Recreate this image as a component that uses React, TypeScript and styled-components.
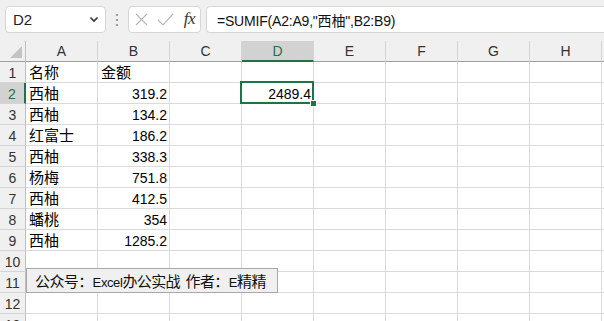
import styled, { createGlobalStyle } from 'styled-components'

const GlobalStyle = createGlobalStyle`
  html, body {
    margin: 0;
    padding: 0;
    background: #ffffff;
    font-family: "Liberation Sans", "Noto Sans CJK SC", sans-serif;
  }
  #root {
    width: 604px;
    height: 321px;
    overflow: hidden;
  }
`

const GREEN = '#217346'

const Toolbar = styled.div`
  height: 41px;
  box-sizing: border-box;
  background: #f0f0f0;
  display: flex;
  align-items: flex-start;
  padding: 6px 0 0 5px;
`

const Box = styled.div`
  height: 27px;
  box-sizing: border-box;
  background: #ffffff;
  border: 1px solid #d6d6d6;
  border-radius: 4px;
  display: flex;
  align-items: center;
`

const NameBox = styled(Box)`
  width: 101px;
  padding: 0 6px 0 7px;
  justify-content: space-between;
  font-size: 15px;
  color: #222;
`

const Dots = styled.div`
  width: 22px;
  height: 27px;
  display: flex;
  align-items: center;
  justify-content: center;
`

const IconGroup = styled(Box)`
  width: 73px;
  padding: 0 5px 0 6px;
  justify-content: space-between;
`

const Fx = styled.span`
  font-family: "Liberation Serif", serif;
  font-style: italic;
  font-size: 17px;
  color: #333;
  padding-bottom: 2px;
  letter-spacing: -0.5px;
`

const FormulaBox = styled(Box)`
  flex: 1;
  margin-left: 5px;
  border-right: none;
  border-radius: 4px 0 0 4px;
  padding-left: 10px;
  font-size: 14px;
  letter-spacing: -0.2px;
  color: #111;
`

const Sheet = styled.div`
  position: relative;
  display: grid;
  grid-template-columns: 26px repeat(8, 72px) 1fr;
  grid-auto-rows: 21px;
`

const Corner = styled.div`
  background: #f0f0f0;
  border-right: 1px solid #bfbfbf;
  border-bottom: 1px solid #a0a0a0;
  position: relative;
  box-sizing: border-box;
  &::after {
    content: '';
    position: absolute;
    right: 3px;
    bottom: 3px;
    width: 0;
    height: 0;
    border-left: 12px solid transparent;
    border-bottom: 12px solid #c3c3c3;
  }
`

const ColHead = styled.div<{ $active?: boolean }>`
  box-sizing: border-box;
  background: ${p => (p.$active ? '#d2d2d2' : '#f0f0f0')};
  border-right: 1px solid #d4d4d4;
  border-bottom: ${p => (p.$active ? `2px solid ${GREEN}` : '1px solid #a0a0a0')};
  color: ${p => (p.$active ? GREEN : '#333')};
  font-size: 14px;
  display: flex;
  align-items: center;
  justify-content: center;
  padding-top: ${p => (p.$active ? '1px' : '0')};
`

const RowHead = styled.div<{ $active?: boolean }>`
  box-sizing: border-box;
  background: ${p => (p.$active ? '#d2d2d2' : '#f0f0f0')};
  border-right: ${p => (p.$active ? `2px solid ${GREEN}` : '1px solid #bfbfbf')};
  border-bottom: 1px solid #d4d4d4;
  color: ${p => (p.$active ? GREEN : '#333')};
  font-size: 14px;
  line-height: 17px;
  padding-top: 3px;
  text-align: center;
`

const Cell = styled.div<{ $num?: boolean }>`
  position: relative;
  box-sizing: border-box;
  border-right: 1px solid #dadada;
  border-bottom: 1px solid #dadada;
  white-space: nowrap;
  color: #000;
  text-align: ${p => (p.$num ? 'right' : 'left')};
  font-family: ${p => (p.$num ? '"Liberation Sans", sans-serif' : '"Noto Sans CJK SC", sans-serif')};
  font-size: ${p => (p.$num ? '14px' : '15px')};
  line-height: ${p => (p.$num ? '17px' : '18px')};
  padding: ${p => (p.$num ? '3px 2px 0 0' : '1px 0 0 3px')};
`

const Selection = styled.div`
  position: absolute;
  top: -2px;
  left: -2px;
  right: -1px;
  bottom: -1px;
  border: 2px solid ${GREEN};
  z-index: 2;
  pointer-events: none;
`

const FillHandle = styled.div`
  position: absolute;
  right: -5px;
  bottom: -5px;
  width: 5px;
  height: 5px;
  background: ${GREEN};
  border: 1px solid #ffffff;
`

const Note = styled.div`
  position: absolute;
  top: 227px;
  left: 26px;
  width: 252px;
  height: 25px;
  box-sizing: border-box;
  background: #f0f0f0;
  border: 1px solid #a8a8a8;
  font-family: "Noto Sans CJK SC", sans-serif;
  font-size: 15px;
  letter-spacing: -0.6px;
  color: #111;
  padding-left: 8px;
  line-height: 23px;
  white-space: nowrap;
  overflow: hidden;
  z-index: 3;
`

const Latin = styled.span`
  font-family: "Liberation Sans", sans-serif;
  font-size: 13px;
  letter-spacing: -0.4px;
`

const cols = ['A', 'B', 'C', 'D', 'E', 'F', 'G', 'H', '']

const data: [string, string][] = [
  ['名称', '金额'],
  ['西柚', '319.2'],
  ['西柚', '134.2'],
  ['红富士', '186.2'],
  ['西柚', '338.3'],
  ['杨梅', '751.8'],
  ['西柚', '412.5'],
  ['蟠桃', '354'],
  ['西柚', '1285.2'],
]

function Chevron() {
  return (
    <svg width="10" height="7" viewBox="0 0 10 7">
      <path d="M1.5 1.5 L5 5 L8.5 1.5" fill="none" stroke="#333" strokeWidth="1.6" />
    </svg>
  )
}

export default function App() {
  const rows = Array.from({ length: 13 }, (_, i) => i + 1)

  return (
    <>
      <GlobalStyle />
      <Toolbar>
        <NameBox>
          <span>D2</span>
          <Chevron />
        </NameBox>
        <Dots>
          <svg width="4" height="14" viewBox="0 0 4 14">
            <circle cx="2" cy="2" r="1.1" fill="#8a8a8a" />
            <circle cx="2" cy="7" r="1.1" fill="#8a8a8a" />
            <circle cx="2" cy="12" r="1.1" fill="#8a8a8a" />
          </svg>
        </Dots>
        <IconGroup>
          <svg width="13" height="13" viewBox="0 0 13 13">
            <path d="M1 1 L12 12 M12 1 L1 12" stroke="#b8b8b8" strokeWidth="1.2" />
          </svg>
          <svg width="17" height="13" viewBox="0 0 17 13">
            <path d="M1 7 L6 12 L16 1" fill="none" stroke="#b8b8b8" strokeWidth="1.2" />
          </svg>
          <Fx>fx</Fx>
        </IconGroup>
        <FormulaBox>=SUMIF(A2:A9,"西柚",B2:B9)</FormulaBox>
      </Toolbar>
      <Sheet>
        <Corner />
        {cols.map((c, i) => (
          <ColHead key={i} $active={c === 'D'}>{c}</ColHead>
        ))}
        {rows.map(r => {
          const rec = data[r - 1]
          return [
            <RowHead key={`h${r}`} $active={r === 2}>{r}</RowHead>,
            ...cols.map((c, i) => {
              if (c === 'A' && rec) return <Cell key={`${r}${i}`}>{rec[0]}</Cell>
              if (c === 'B' && rec) {
                return r === 1
                  ? <Cell key={`${r}${i}`}>{rec[1]}</Cell>
                  : <Cell key={`${r}${i}`} $num>{rec[1]}</Cell>
              }
              if (c === 'D' && r === 2) {
                return (
                  <Cell key={`${r}${i}`} $num>
                    2489.4
                    <Selection>
                      <FillHandle />
                    </Selection>
                  </Cell>
                )
              }
              return <Cell key={`${r}${i}`} />
            }),
          ]
        })}
        <Note>
          公众号：<Latin>Excel</Latin>办公实战&nbsp;&nbsp;作者：<Latin>E</Latin>精精
        </Note>
      </Sheet>
    </>
  )
}
